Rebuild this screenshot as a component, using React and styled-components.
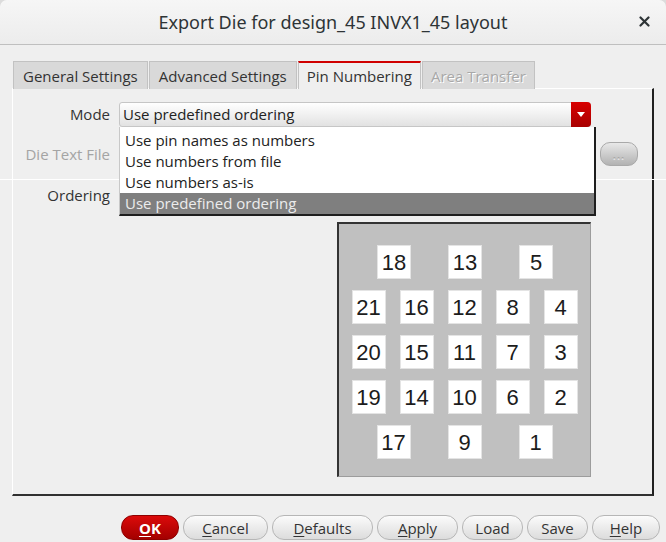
import React from 'react';
import styled, { createGlobalStyle } from 'styled-components';

const GlobalStyle = createGlobalStyle`
    html, body {
        margin: 0;
        padding: 0;
        background: #dcdcdc;
    }
    * {
        box-sizing: border-box;
    }
`

const Dialog = styled.div`
    position: relative;
    width: 666px;
    height: 542px;
    overflow: hidden;
    display: flex;
    flex-direction: column;
    background: #efefef;
    border-radius: 7px 7px 0 0;
    font-family: "Open Sans", "Noto Sans", sans-serif;
    font-size: 15px;
    color: #333;
`

const TitleBar = styled.div`
    position: relative;
    height: 45px;
    flex: none;
    display: flex;
    align-items: center;
    justify-content: center;
    background: linear-gradient(180deg, #f6f6f6, #ececec);
    border-bottom: 1px solid #bfbfbf;
    border-radius: 7px 7px 0 0;
`

const Title = styled.div`
    font-family: "Noto Sans", "Open Sans", sans-serif;
    font-size: 18px;
    color: #2e3436;
    margin-top: -1px;
`

const CloseButton = styled.div`
    position: absolute;
    right: 16px;
    top: 16px;
    width: 11px;
    height: 11px;
    display: flex;
`

const Body = styled.div`
    flex: 1;
    display: flex;
    flex-direction: column;
    padding: 16px 12px 0 12px;
`

const TabBar = styled.div`
    display: flex;
    height: 27px;
    padding-left: 1px;
`

const Tab = styled.div`
    height: 28px;
    padding: 0 ${p => p.$pad}px;
    display: flex;
    align-items: center;
    margin-right: 1px;
    white-space: nowrap;
    background: ${p => p.$active ? '#efefef' : '#d9d9d9'};
    border: 1px solid #c2c2c2;
    border-bottom: none;
    border-top: ${p => p.$active ? '2px solid #d00000' : '1px solid #c2c2c2'};
    color: ${p => p.$disabled ? '#a8a8a8' : '#333'};
    text-shadow: ${p => p.$disabled ? '1px 1px 0 #fff' : 'none'};
    position: relative;
    z-index: ${p => p.$active ? 2 : 1};
`

const Panel = styled.div`
    height: 408px;
    flex: none;
    border-top: 1px solid #ffffff;
    border-left: 1px solid #ffffff;
    border-right: 2px solid #202020;
    border-bottom: 2px solid #303030;
    padding-top: 13px;
`

const Form = styled.div`
    display: grid;
    grid-template-columns: 97px 472px 38px;
    column-gap: 9px;
    align-items: start;
`

const Label = styled.div`
    grid-column: 1;
    text-align: right;
    height: ${p => p.$h || 25}px;
    line-height: ${p => p.$h || 25}px;
    margin-top: ${p => p.$mt || 0}px;
    color: ${p => p.$disabled ? '#a4a4a4' : '#333'};
    white-space: nowrap;
`

const Field = styled.div`
    grid-column: 2;
    position: relative;
    margin-top: ${p => p.$mt || 0}px;
    display: flex;
    flex-direction: column;
    align-items: ${p => p.$end ? 'flex-end' : 'stretch'};
`

const Combo = styled.div`
    height: 25px;
    display: flex;
    align-items: stretch;
    background: linear-gradient(180deg, #ffffff, #e2e2e2);
    border: 1px solid #c6c6c6;
    border-radius: 3px;
`

const ComboText = styled.div`
    flex: 1;
    padding-left: 3px;
    line-height: 22px;
    color: #222;
`

const ComboArrow = styled.div`
    width: 20px;
    margin: -1px -1px -1px 0;
    background: linear-gradient(180deg, #d80000, #a80000);
    border-radius: 0 4px 4px 0;
    display: flex;
    align-items: center;
    justify-content: center;
`

const DropList = styled.div`
    position: absolute;
    top: 25px;
    left: 0;
    width: 477px;
    z-index: 10;
    background: #ffffff;
    border-left: 1px solid #c8c8c8;
    border-right: 2px solid #1e1e1e;
    border-bottom: 2px solid #1e1e1e;
    padding-top: 3px;
`

const DropItem = styled.div`
    height: 21px;
    line-height: 21px;
    padding-left: 5px;
    color: ${p => p.$selected ? '#ececec' : '#222'};
    background: ${p => p.$selected ? '#7f7f7f' : 'transparent'};
`

const TextInput = styled.div`
    height: 25px;
    background: #f4f4f4;
    border: 1px solid #c6c6c6;
    border-radius: 3px;
`

const SmallButton = styled.div`
    grid-column: 3;
    margin-top: ${p => p.$mt || 0}px;
    height: 24px;
    border: 1px solid #a9a9a9;
    border-radius: 10px;
    background: linear-gradient(180deg, #e8e8e8, #b2b2b2);
    display: flex;
    align-items: center;
    justify-content: center;
    font-size: 11px;
    font-weight: bold;
    letter-spacing: 1px;
    color: #e4e4e4;
    text-shadow: 0 -1px 0 #9a9a9a;
    padding-top: 3px;
`

const Canvas = styled.div`
    margin-top: 37px;
    width: 254px;
    height: 255px;
    background: #c0c0c0;
    border-top: 2px solid #333;
    border-left: 2px solid #333;
    border-right: 1px solid #9c9c9c;
    border-bottom: 1px solid #9c9c9c;
    display: flex;
    flex-direction: column;
    align-items: center;
    padding-top: 21px;
    gap: 11px;
`

const PinRow = styled.div`
    display: flex;
    gap: ${p => p.$gap}px;
    padding-left: ${p => p.$shift || 0}px;
`

const Pin = styled.div`
    width: 34px;
    height: 34px;
    background: #ffffff;
    border: 1px solid #e4e4e4;
    display: flex;
    align-items: center;
    justify-content: center;
    font-family: "Liberation Sans", Arial, sans-serif;
    font-size: 22px;
    color: #1c1c1c;
    padding-top: 1px;
`

const GlitchLine = styled.div`
    position: absolute;
    left: 0;
    right: 0;
    top: 179px;
    height: 1px;
    background: #ffffff;
    z-index: 5;
`

const Footer = styled.div`
    display: flex;
    justify-content: flex-end;
    gap: 4px;
    padding: 19px 6px 0 0;
    margin-right: -12px;
`

const Button = styled.div`
    width: ${p => p.$w}px;
    height: 25px;
    border-radius: 12px;
    display: flex;
    align-items: center;
    justify-content: center;
    border: 1px solid ${p => p.$primary ? '#8e0000' : '#b6b6b6'};
    background: ${p => p.$primary
        ? 'linear-gradient(180deg, #dc0a0a, #a30000)'
        : 'linear-gradient(180deg, #fbfbfb, #dcdcdc)'};
    color: ${p => p.$primary ? '#ffffff' : '#333'};
    font-weight: ${p => p.$primary ? 'bold' : 'normal'};
    white-space: nowrap;
`

const U = styled.span`
    text-decoration: underline;
    text-underline-offset: 2px;
`

const pinRows = [
    { gap: 37, shift: 1, pins: [18, 13, 5] },
    { gap: 14, pins: [21, 16, 12, 8, 4] },
    { gap: 14, pins: [20, 15, 11, 7, 3] },
    { gap: 14, pins: [19, 14, 10, 6, 2] },
    { gap: 37, shift: 0, pins: [17, 9, 1] },
]

const options = [
    'Use pin names as numbers',
    'Use numbers from file',
    'Use numbers as-is',
    'Use predefined ordering',
]

const App = () => {
    return (
        <Dialog>
            <GlobalStyle />
            <TitleBar>
                <Title>Export Die for design_45 INVX1_45 layout</Title>
                <CloseButton>
                    <svg width="11" height="11" viewBox="0 0 11 11">
                        <path d="M1.5 1.5 L9.5 9.5 M9.5 1.5 L1.5 9.5" stroke="#2e3436" strokeWidth="2.2" strokeLinecap="round" />
                    </svg>
                </CloseButton>
            </TitleBar>
            <GlitchLine />
            <Body>
                <TabBar>
                    <Tab $pad={9}>General Settings</Tab>
                    <Tab $pad={9}>Advanced Settings</Tab>
                    <Tab $pad={8} $active>Pin Numbering</Tab>
                    <Tab $pad={8} $disabled>Area Transfer</Tab>
                </TabBar>
                <Panel>
                    <Form>
                        <Label>Mode</Label>
                        <Field>
                            <Combo>
                                <ComboText>Use predefined ordering</ComboText>
                                <ComboArrow>
                                    <svg width="8" height="5" viewBox="0 0 8 5">
                                        <path d="M0 0 H8 L4 5 Z" fill="#ffffff" />
                                    </svg>
                                </ComboArrow>
                            </Combo>
                            <DropList>
                                {options.map((o, i) => (
                                    <DropItem key={o} $selected={i === 3}>{o}</DropItem>
                                ))}
                            </DropList>
                        </Field>
                        <div />

                        <Label $mt={15} $disabled>Die Text File</Label>
                        <Field $mt={15}>
                            <TextInput />
                        </Field>
                        <SmallButton $mt={15}>...</SmallButton>

                        <Label $mt={18} $h={20}>Ordering</Label>
                        <Field $mt={18} $end>
                            <Canvas>
                                {pinRows.map((r, i) => (
                                    <PinRow key={i} $gap={r.gap} $shift={r.shift}>
                                        {r.pins.map(n => <Pin key={n}>{n}</Pin>)}
                                    </PinRow>
                                ))}
                            </Canvas>
                        </Field>
                    </Form>
                </Panel>
                <Footer>
                    <Button $w={58} $primary><U>O</U>K</Button>
                    <Button $w={85}><U>C</U>ancel</Button>
                    <Button $w={101}><U>D</U>efaults</Button>
                    <Button $w={81}><U>A</U>pply</Button>
                    <Button $w={61}>Load</Button>
                    <Button $w={61}>Save</Button>
                    <Button $w={68}><U>H</U>elp</Button>
                </Footer>
            </Body>
        </Dialog>
    );
};

export default App;
